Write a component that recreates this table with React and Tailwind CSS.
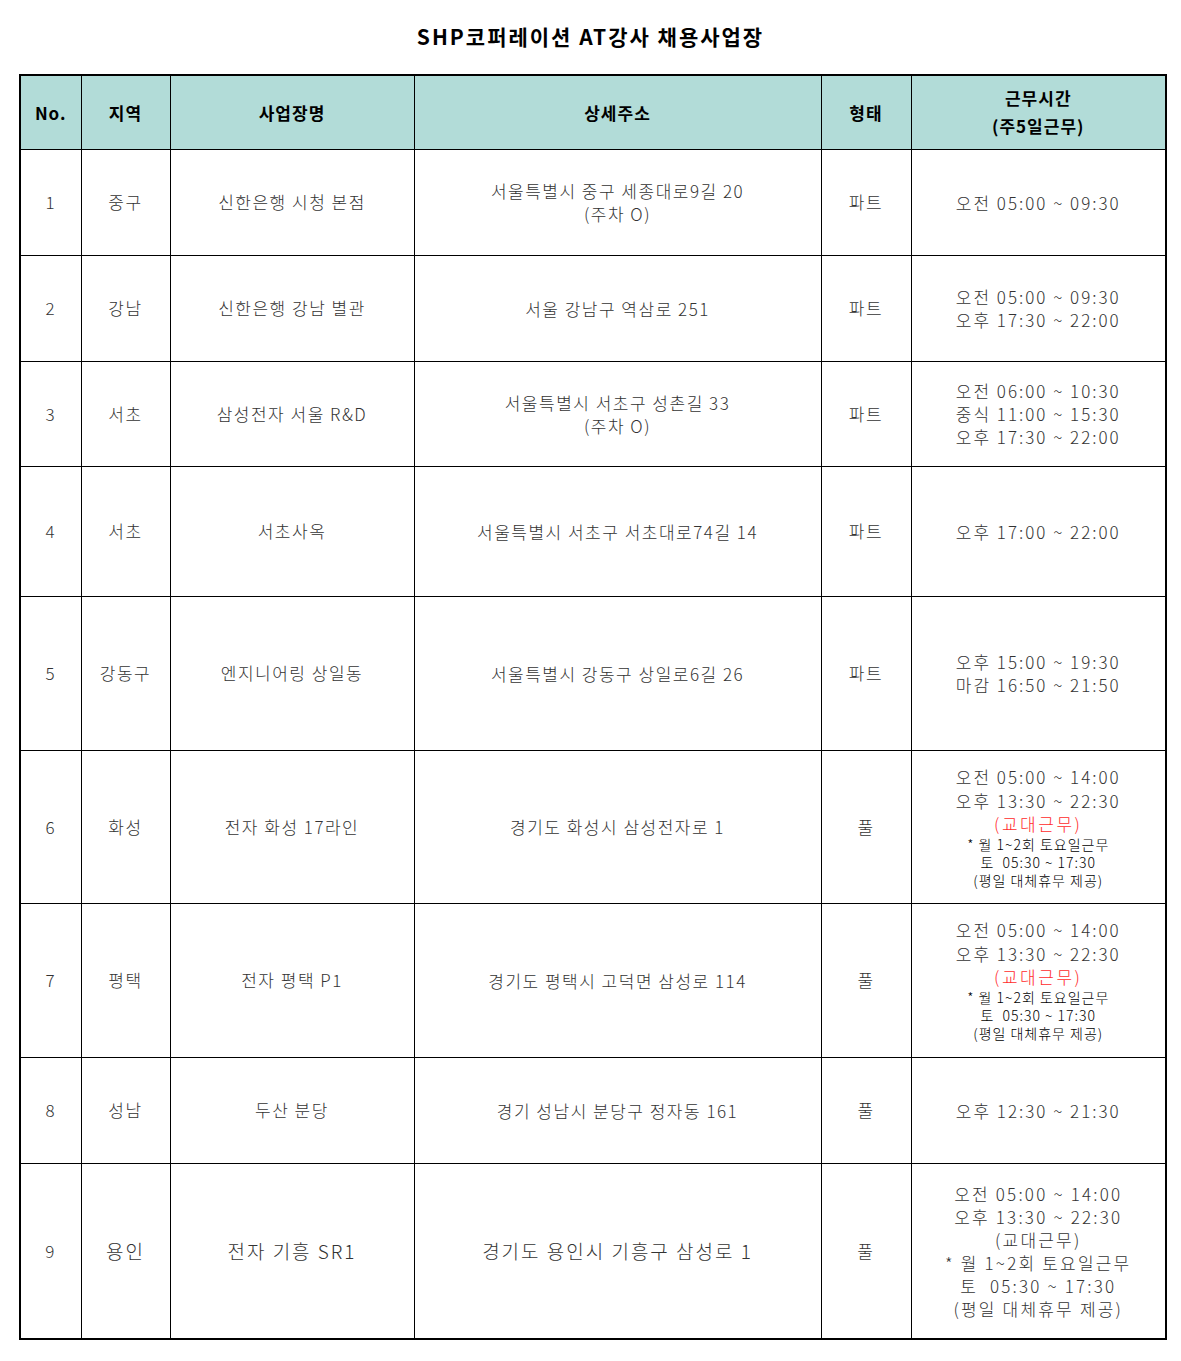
const rows = [
  { no: '1', area: '중구', name: '신한은행 시청 본점', addr: ['서울특별시 중구 세종대로9길 20', '(주차 O)'], type: '파트', h: 'h-[106px]', time: ['오전 05:00 ~ 09:30'] },
  { no: '2', area: '강남', name: '신한은행 강남 별관', addr: ['서울 강남구 역삼로 251'], type: '파트', h: 'h-[106px]', time: ['오전 05:00 ~ 09:30', '오후 17:30 ~ 22:00'] },
  { no: '3', area: '서초', name: '삼성전자 서울 R&D', addr: ['서울특별시 서초구 성촌길 33', '(주차 O)'], type: '파트', h: 'h-[105px]', time: ['오전 06:00 ~ 10:30', '중식 11:00 ~ 15:30', '오후 17:30 ~ 22:00'] },
  { no: '4', area: '서초', name: '서초사옥', addr: ['서울특별시 서초구 서초대로74길 14'], type: '파트', h: 'h-[130px]', time: ['오후 17:00 ~ 22:00'] },
  { no: '5', area: '강동구', name: '엔지니어링 상일동', addr: ['서울특별시 강동구 상일로6길 26'], type: '파트', h: 'h-[154px]', time: ['오후 15:00 ~ 19:30', '마감 16:50 ~ 21:50'] },
  { no: '6', area: '화성', name: '전자 화성 17라인', addr: ['경기도 화성시 삼성전자로 1'], type: '풀', h: 'h-[153px]', shift: true },
  { no: '7', area: '평택', name: '전자 평택 P1', addr: ['경기도 평택시 고덕면 삼성로 114'], type: '풀', h: 'h-[154px]', shift: true },
  { no: '8', area: '성남', name: '두산 분당', addr: ['경기 성남시 분당구 정자동 161'], type: '풀', h: 'h-[106px]', time: ['오후 12:30 ~ 21:30'] },
];

const cell = 'border border-black text-center align-middle';

function ShiftTime() {
  return (
    <div className="flex flex-col items-center">
      <div className="leading-[24px] tracking-[2px]">오전 05:00 ~ 14:00</div>
      <div className="leading-[24px] tracking-[2px]">오후 13:30 ~ 22:30</div>
      <div className="leading-[22px] tracking-[2.5px] text-[#ff2b2b]">(교대근무)</div>
      <div className="text-[14px] leading-[18px] tracking-[1px] text-black">* 월 1~2회 토요일근무</div>
      <div className="text-[14px] leading-[18px] tracking-[1px] text-black">토&nbsp;&nbsp;05:30 ~ 17:30</div>
      <div className="text-[14px] leading-[18px] tracking-[1px] text-black">(평일 대체휴무 제공)</div>
    </div>
  );
}

export default function App() {
  return (
    <div className="w-[1181px] min-h-[1361px] bg-white pt-[20px] text-[#333]" style={{ fontFamily: '"Noto Sans CJK KR", "DejaVu Sans", sans-serif' }}>
      <h1 className="text-center text-[21px] font-bold tracking-[2px] text-black leading-[32px]">SHP코퍼레이션 AT강사 채용사업장</h1>
      <table className="ml-[19px] mt-[22px] w-[1146px] table-fixed border-collapse border-2 border-black text-[17px] font-light tracking-[1.5px]">
        <colgroup>
          <col className="w-[61px]" />
          <col className="w-[89px]" />
          <col className="w-[244px]" />
          <col className="w-[407px]" />
          <col className="w-[90px]" />
          <col className="w-[255px]" />
        </colgroup>
        <thead>
          <tr className="h-[74px] bg-[#b2dcd8] text-black font-bold text-[17px] tracking-[1px]">
            <th className={cell}>No.</th>
            <th className={cell}>지역</th>
            <th className={cell}>사업장명</th>
            <th className={cell}>상세주소</th>
            <th className={cell}>형태</th>
            <th className={`${cell} leading-[28px]`}>근무시간<br />(주5일근무)</th>
          </tr>
        </thead>
        <tbody>
          {rows.map((r) => (
            <tr key={r.no} className={r.h}>
              <td className={cell}>{r.no}</td>
              <td className={cell}>{r.area}</td>
              <td className={cell}>{r.name}</td>
              <td className={`${cell} leading-[23px]`}>
                {r.addr.map((a) => (
                  <div key={a}>{a}</div>
                ))}
              </td>
              <td className={cell}>{r.type}</td>
              <td className={`${cell} leading-[23px] tracking-[2px]`}>
                {r.shift ? <ShiftTime /> : r.time.map((t) => <div key={t}>{t}</div>)}
              </td>
            </tr>
          ))}
          <tr className="h-[176px] text-[19px] tracking-[2px]">
            <td className={`${cell} text-[17px]`}>9</td>
            <td className={cell}>용인</td>
            <td className={cell}>전자 기흥 SR1</td>
            <td className={cell}>경기도 용인시 기흥구 삼성로 1</td>
            <td className={`${cell} text-[17px]`}>풀</td>
            <td className={`${cell} text-[17px] leading-[23px] tracking-[2.2px]`}>
              <div>오전 05:00 ~ 14:00</div>
              <div>오후 13:30 ~ 22:30</div>
              <div>(교대근무)</div>
              <div>* 월 1~2회 토요일근무</div>
              <div>토&nbsp;&nbsp;05:30 ~ 17:30</div>
              <div>(평일 대체휴무 제공)</div>
            </td>
          </tr>
        </tbody>
      </table>
    </div>
  );
}
